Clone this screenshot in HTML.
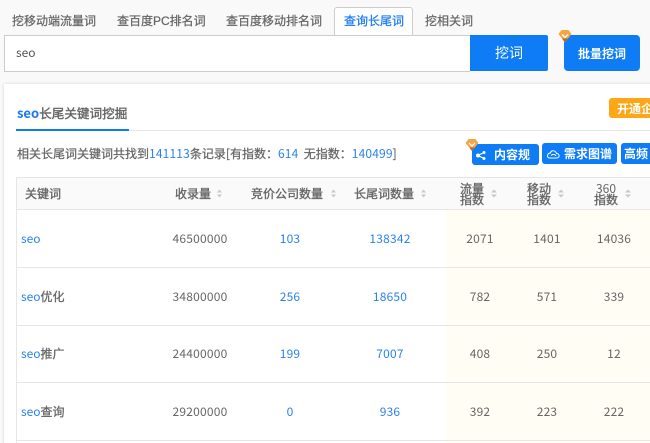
<!DOCTYPE html>
<html><head><meta charset="utf-8">
<style>
html{margin:0;padding:0;width:650px;height:443px;overflow:hidden}
body{margin:0;padding:0;width:650px;height:443px;overflow:hidden;position:relative;background:#f9f9f9;font-family:"Noto Sans CJK SC",sans-serif;font-size:12px;color:#666}
#w{position:absolute;left:0;top:0;width:650px;height:443px;overflow:hidden}
.a{position:absolute;white-space:nowrap}
.b{color:#2a82f0}
.tab{top:12px;height:18px;line-height:18px;color:#666;-webkit-text-stroke:.25px #666;font-family:"Liberation Sans","Noto Sans CJK SC",sans-serif;font-size:12px}
.btn{background:#0d7cf5;color:#fff;text-align:center}
.chip{top:144px;height:21px;line-height:21px;background:#0d7cf5;color:#fff;border-radius:3px;font-size:12px;font-weight:700}
.h{top:178px;height:31px;line-height:31px;font-size:12px;-webkit-text-stroke:.35px #666;color:#666}
.h2{line-height:11px;text-align:center;width:28px;height:22px;top:183px;font-size:12px;-webkit-text-stroke:.35px #666;color:#666}
.line{background:#e6e6e6;height:1px}
.c{text-align:center;width:90px;line-height:16px;height:16px;transform:translateX(-45px);letter-spacing:.2px}
.k{left:21px;line-height:16px;height:16px}
.k span{color:#666;-webkit-text-stroke:.3px #666}
.s{-webkit-text-stroke:.25px #666}
.n{letter-spacing:.15px}
</style></head>
<body><div id="w">
<div class="a tab" style="left:12px">挖移动端流量词</div>
<div class="a tab" style="left:117px">查百度PC排名词</div>
<div class="a tab" style="left:226px">查百度移动排名词</div>
<div class="a" style="left:334px;top:7px;width:77px;height:28px;background:#fff;border:1px solid #ccc;border-bottom:0;border-radius:3px 3px 0 0"></div>
<div class="a tab" style="left:344px;color:#1a7cf0;-webkit-text-stroke:.25px #1a7cf0">查询长尾词</div>
<div class="a tab" style="left:425px">挖相关词</div>

<div class="a" style="left:4px;top:35px;width:465px;height:35px;background:#fff;border:1px solid #ccc;border-right:0"></div>
<div class="a" style="left:16px;top:45px;line-height:16px;color:#555">seo</div>
<div class="a btn" style="left:470px;top:35px;width:78px;height:36px;line-height:36px;border-radius:0 2px 2px 0;font-size:14px">挖词</div>
<div class="a btn" style="left:564px;top:35px;width:76px;height:36px;line-height:37px;border-radius:4px;font-weight:700">批量挖词</div>
<svg class="a" style="left:558px;top:29px" width="14" height="15" viewBox="0 0 14 15"><path d="M3.500 1H10.500L13.500 5L7 13.500L.5 5Z" fill="#f5a644"/><path d="M4 5.500L7 8.500L10 5.500" fill="none" stroke="#fff" stroke-width="1.300"/><path d="M7 13.500L4 9.500H10Z" fill="#a86a3a"/></svg>

<div class="a" style="left:4px;top:84px;width:660px;height:370px;background:#fff;box-shadow:0 0 3px rgba(0,0,0,.16)"></div>
<div class="a" style="left:17px;top:104px;line-height:18px;color:#666"><span class="b" style="font-size:13px;font-weight:700;color:#1a7cf0">seo</span><span style="font-size:12.600px;-webkit-text-stroke:.4px #666">长尾关键词挖掘</span></div>
<div class="a line" style="left:16px;top:130px;width:634px"></div>
<div class="a" style="left:16px;top:129px;width:113px;height:2px;background:#0d7cf5"></div>
<div class="a" style="left:609px;top:98px;width:60px;height:20px;line-height:21px;background:#ffa616;color:#fff;border-radius:3px;font-weight:700;text-indent:8px">开通企业</div>

<div class="a" style="left:17px;top:145px;line-height:17px"><span class="s">相关长尾词关键词共找到</span><span class="b n">141113</span><span class="s">条记录[有指数：</span><span class="b n">614</span><span class="s"> &nbsp;无指数：</span><span class="b n">140499</span><span class="s">]</span></div>

<div class="a chip" style="left:472px;width:67px"><span class="a" style="left:22px">内容规</span></div>
<svg class="a" style="left:476px;top:151px" width="10" height="9" viewBox="0 0 10 9"><circle cx="2" cy="4.500" r="2" fill="#fff"/><circle cx="8" cy="1.500" r="1.500" fill="#fff"/><circle cx="8" cy="7.500" r="1.500" fill="#fff"/><path d="M2 4.500L8 1.500M2 4.500L8 7.500" stroke="#fff"/></svg>
<svg class="a" style="left:465px;top:138px" width="14" height="14" viewBox="0 0 14 14"><path d="M3.500 1H10.500L13.500 5L7 13L.5 5Z" fill="#f5a644"/><path d="M4 5L7 8L10 5" fill="none" stroke="#fff" stroke-width="1.200"/><path d="M7 13L4.500 9.500H9.500Z" fill="#a86a3a"/></svg>
<div class="a chip" style="left:542px;width:75px;top:143px"><span class="a" style="left:22px">需求图谱</span></div>
<svg class="a" style="left:546px;top:149px" width="14" height="11" viewBox="0 0 14 11"><path d="M3.500 9H10.500C14 9 14 4.500 10.500 4.500C9.500 1 5 1 4.500 4C1 4 .5 9 3.500 9ZM5 6.500C7 5 9 5 10 7" fill="none" stroke="#fff"/></svg>
<div class="a chip" style="left:621px;width:50px;top:143px"><span class="a" style="left:3px">高频</span></div>

<div class="a" style="left:17px;top:178px;width:640px;height:31px;background:#fafafa"></div>
<div class="a" style="left:446px;top:210px;width:210px;height:233px;background:#fffdf4"></div>
<div class="a line" style="left:16px;top:177px;width:634px"></div>
<div class="a line" style="left:16px;top:209px;width:634px"></div>
<div class="a line" style="left:16px;top:267px;width:634px"></div>
<div class="a line" style="left:16px;top:325px;width:634px"></div>
<div class="a line" style="left:16px;top:382px;width:634px"></div>
<div class="a line" style="left:16px;top:440px;width:634px"></div>
<div class="a" style="left:16px;top:177px;width:1px;height:266px;background:#e6e6e6"></div>

<div class="a h" style="left:25px">关键词</div>
<div class="a h" style="left:175px">收录量</div>
<div class="a h" style="left:251px">竞价公司数量</div>
<div class="a h" style="left:354px">长尾词数量</div>
<div class="a h2" style="left:458px">流量<br>指数</div>
<div class="a h2" style="left:525px">移动<br>指数</div>
<div class="a h2" style="left:592px;-webkit-text-stroke:0">360<br><span style="-webkit-text-stroke:.35px #666">指数</span></div>
<svg class="a" style="left:0;top:0" width="650" height="443"><g fill="#c8c8c8"><path d="M217 192.500L219.500 189.500L222 192.500ZM217 194.500L219.500 197.500L222 194.500Z"/><path d="M331 192.500L333.500 189.500L336 192.500ZM331 194.500L333.500 197.500L336 194.500Z"/><path d="M421 192.500L423.500 189.500L426 192.500ZM421 194.500L423.500 197.500L426 194.500Z"/><path d="M491 192.500L494 189.500L497 192.500ZM491 194.500L494 197.500L497 194.500Z"/><path d="M558 192.500L561 189.500L564 192.500ZM558 194.500L561 197.500L564 194.500Z"/><path d="M625 192.500L628 189.500L631 192.500ZM625 194.500L628 197.500L631 194.500Z"/></g></svg>

<div class="a k b" style="top:231px">seo</div>
<div class="a c" style="left:200px;top:231px">46500000</div>
<div class="a c b" style="left:290px;top:231px">103</div>
<div class="a c b" style="left:390px;top:231px">138342</div>
<div class="a c" style="left:480px;top:231px">2071</div>
<div class="a c" style="left:547px;top:231px">1401</div>
<div class="a c" style="left:614px;top:231px">14036</div>

<div class="a k b" style="top:289px">seo<span>优化</span></div>
<div class="a c" style="left:200px;top:289px">34800000</div>
<div class="a c b" style="left:290px;top:289px">256</div>
<div class="a c b" style="left:390px;top:289px">18650</div>
<div class="a c" style="left:480px;top:289px">782</div>
<div class="a c" style="left:547px;top:289px">571</div>
<div class="a c" style="left:614px;top:289px">339</div>

<div class="a k b" style="top:346px">seo<span>推广</span></div>
<div class="a c" style="left:200px;top:346px">24400000</div>
<div class="a c b" style="left:290px;top:346px">199</div>
<div class="a c b" style="left:390px;top:346px">7007</div>
<div class="a c" style="left:480px;top:346px">408</div>
<div class="a c" style="left:547px;top:346px">250</div>
<div class="a c" style="left:614px;top:346px">12</div>

<div class="a k b" style="top:404px">seo<span>查询</span></div>
<div class="a c" style="left:200px;top:404px">29200000</div>
<div class="a c b" style="left:290px;top:404px">0</div>
<div class="a c b" style="left:390px;top:404px">936</div>
<div class="a c" style="left:480px;top:404px">392</div>
<div class="a c" style="left:547px;top:404px">223</div>
<div class="a c" style="left:614px;top:404px">222</div>
</div></body></html>
